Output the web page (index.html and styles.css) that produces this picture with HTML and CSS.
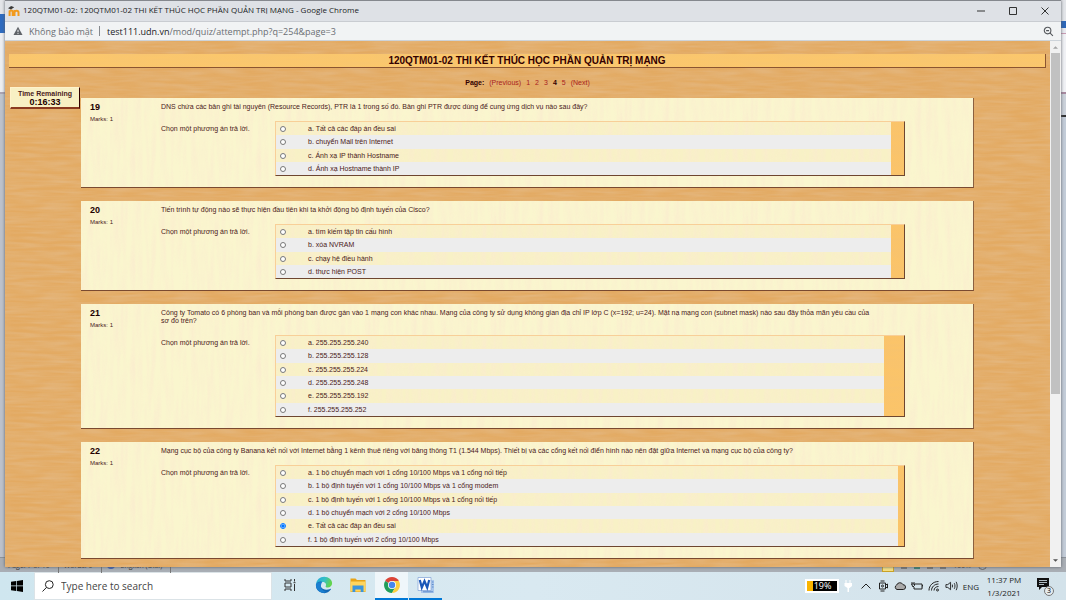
FILE: index.html
```html
<!DOCTYPE html>
<html lang="vi">
<head>
<meta charset="utf-8">
<title>120QTM01-02: 120QTM01-02 THI KẾT THÚC HỌC PHẦN QUẢN TRỊ MẠNG</title>
<link rel="stylesheet" href="styles.css">
</head>
<body>
<div class="desktop">
  <div class="word-left" aria-hidden="true"></div>
  <div class="word-right" aria-hidden="true"></div>
  <div class="word-status" aria-hidden="true">
    <span class="status-item">Page: 7 of 10</span>
    <span class="status-item">Words: 0</span>
    <span class="status-item"><i class="status-dot"></i>English (U.S.)</span>
    <span class="status-views"><i class="view on"></i><i class="view"></i><i class="view green"></i><i class="view"></i><i class="view"></i><b>100%</b><i class="knob"></i></span>
  </div>
  <div class="window">
    <header class="titlebar">
      <svg class="favicon" viewBox="0 0 12 12"><path d="M1.600 11V5.600M1.600 6.400C2.200 5 4.700 5 4.700 7v4M6.500 11V5M6.500 7.500c.3-2.500 4-2.500 4 0V11" fill="none" stroke="#f29a1c" stroke-width="2"/><path d="M0 3.200 3.200 1l3 1.300L3 4.500z" fill="#3b3b3b"/></svg>
      <span class="title">120QTM01-02: 120QTM01-02 THI KẾT THÚC HỌC PHẦN QUẢN TRỊ MẠNG - Google Chrome</span>
      <div class="window-buttons">
        <button aria-label="Minimize"><svg viewBox="0 0 10 10"><path d="M1 5h8"/></svg></button>
        <button aria-label="Maximize"><svg viewBox="0 0 10 10"><path d="M1.500 1.500h7v7h-7z"/></svg></button>
        <button aria-label="Close"><svg viewBox="0 0 10 10"><path d="m1.500 1.500 7 7m0-7-7 7"/></svg></button>
      </div>
    </header>
    <div class="address">
      <svg class="warn" viewBox="0 0 10 10"><path d="M5 .8 9.500 9h-9z" fill="#5f6368"/><path d="M5 3.800v2.400M5 7.100v1" stroke="#f1f3f4" stroke-width="1"/></svg>
      <span class="insecure">Không bảo mật</span>
      <span class="divider"></span>
      <span class="url"><b>test111.udn.vn</b>/mod/quiz/attempt.php?q=254&amp;page=3</span>
      <button class="zoom" aria-label="Zoom"><svg viewBox="0 0 12 12"><circle cx="5" cy="5" r="3.600"/><path d="m7.800 7.800 3 3M3.400 5h3.200"/></svg></button>
    </div>
    <div class="viewport">
      <main class="page">
        <h1>120QTM01-02 THI KẾT THÚC HỌC PHẦN QUẢN TRỊ MẠNG</h1>
        <nav class="paging"><b>Page:</b><a href="#">(Previous)</a><a href="#">1</a><a href="#">2</a><a href="#">3</a><b>4</b><a href="#">5</a><a href="#">(Next)</a></nav>
        <aside class="timer">Time Remaining<strong>0:16:33</strong></aside>
        <form class="questions">
          <section class="card">
            <div class="info"><h2>19</h2><p>Marks: 1</p></div>
            <div class="content">
              <p class="question">DNS chứa các bản ghi tài nguyên (Resource Records), PTR là 1 trong số đó. Bản ghi PTR được dùng để cung ứng dịch vụ nào sau đây?</p>
              <div class="ablock">
                <p>Chọn một phương án trả lời.</p>
                <div class="answers end-m"><table>
                  <tr><td><input type="radio" name="q19" id="q19a"></td><td><label for="q19a">a. Tất cả các đáp án đều sai</label></td></tr>
                  <tr><td><input type="radio" name="q19" id="q19b"></td><td><label for="q19b">b. chuyển Mail trên Internet</label></td></tr>
                  <tr><td><input type="radio" name="q19" id="q19c"></td><td><label for="q19c">c. Ánh xạ IP thành Hostname</label></td></tr>
                  <tr><td><input type="radio" name="q19" id="q19d"></td><td><label for="q19d">d. Ánh xạ Hostname thành IP</label></td></tr>
                </table></div>
              </div>
            </div>
          </section>
          <section class="card">
            <div class="info"><h2>20</h2><p>Marks: 1</p></div>
            <div class="content">
              <p class="question">Tiến trình tự động nào sẽ thực hiện đầu tiên khi ta khởi động bộ định tuyến của Cisco?</p>
              <div class="ablock">
                <p>Chọn một phương án trả lời.</p>
                <div class="answers end-m"><table>
                  <tr><td><input type="radio" name="q20" id="q20a"></td><td><label for="q20a">a. tìm kiếm tập tin cấu hình</label></td></tr>
                  <tr><td><input type="radio" name="q20" id="q20b"></td><td><label for="q20b">b. xóa NVRAM</label></td></tr>
                  <tr><td><input type="radio" name="q20" id="q20c"></td><td><label for="q20c">c. chạy hệ điều hành</label></td></tr>
                  <tr><td><input type="radio" name="q20" id="q20d"></td><td><label for="q20d">d. thực hiện POST</label></td></tr>
                </table></div>
              </div>
            </div>
          </section>
          <section class="card">
            <div class="info"><h2>21</h2><p>Marks: 1</p></div>
            <div class="content">
              <p class="question">Công ty Tomato có 6 phòng ban và mỗi phòng ban được gán vào 1 mạng con khác nhau. Mạng của công ty sử dụng không gian địa chỉ IP lớp C (x=192; u=24). Mặt nạ mạng con (subnet mask) nào sau đây thỏa mãn yêu cầu của sơ đồ trên?</p>
              <div class="ablock">
                <p>Chọn một phương án trả lời.</p>
                <div class="answers end-l"><table>
                  <tr><td><input type="radio" name="q21" id="q21a"></td><td><label for="q21a">a. 255.255.255.240</label></td></tr>
                  <tr><td><input type="radio" name="q21" id="q21b"></td><td><label for="q21b">b. 255.255.255.128</label></td></tr>
                  <tr><td><input type="radio" name="q21" id="q21c"></td><td><label for="q21c">c. 255.255.255.224</label></td></tr>
                  <tr><td><input type="radio" name="q21" id="q21d"></td><td><label for="q21d">d. 255.255.255.248</label></td></tr>
                  <tr><td><input type="radio" name="q21" id="q21e"></td><td><label for="q21e">e. 255.255.255.192</label></td></tr>
                  <tr><td><input type="radio" name="q21" id="q21f"></td><td><label for="q21f">f. 255.255.255.252</label></td></tr>
                </table></div>
              </div>
            </div>
          </section>
          <section class="card">
            <div class="info"><h2>22</h2><p>Marks: 1</p></div>
            <div class="content">
              <p class="question">Mạng cục bộ của công ty Banana kết nối với Internet bằng 1 kênh thuê riêng với băng thông T1 (1.544 Mbps). Thiết bị và các cổng kết nối điển hình nào nên đặt giữa Internet và mạng cục bộ của công ty?</p>
              <div class="ablock">
                <p>Chọn một phương án trả lời.</p>
                <div class="answers end-s"><table>
                  <tr><td><input type="radio" name="q22" id="q22a"></td><td><label for="q22a">a. 1 bộ chuyển mạch với 1 cổng 10/100 Mbps và 1 cổng nối tiếp</label></td></tr>
                  <tr><td><input type="radio" name="q22" id="q22b"></td><td><label for="q22b">b. 1 bộ định tuyến với 1 cổng 10/100 Mbps và 1 cổng modem</label></td></tr>
                  <tr><td><input type="radio" name="q22" id="q22c"></td><td><label for="q22c">c. 1 bộ định tuyến với 1 cổng 10/100 Mbps và 1 cổng nối tiếp</label></td></tr>
                  <tr><td><input type="radio" name="q22" id="q22d"></td><td><label for="q22d">d. 1 bộ chuyển mạch với 2 cổng 10/100 Mbps</label></td></tr>
                  <tr><td><input type="radio" name="q22" id="q22e" checked></td><td><label for="q22e">e. Tất cả các đáp án đều sai</label></td></tr>
                  <tr><td><input type="radio" name="q22" id="q22f"></td><td><label for="q22f">f. 1 bộ định tuyến với 2 cổng 10/100 Mbps</label></td></tr>
                </table></div>
              </div>
            </div>
          </section>
        </form>
      </main>
      <div class="scrollbar">
        <button aria-label="Scroll up"><svg viewBox="0 0 6 4"><path d="M0 4 3 1l3 3z" fill="#a3a3a3"/></svg></button>
        <div class="track"><div class="thumb"></div></div>
        <button aria-label="Scroll down"><svg viewBox="0 0 6 4"><path d="M0 0h6L3 3z" fill="#505050"/></svg></button>
      </div>
    </div>
  </div>
</div>
<footer class="taskbar">
  <button class="start" aria-label="Start"><svg viewBox="0 0 12 12"><path d="M0 1.700 5.200 1v4.600H0zM5.900.9 12 0v5.600H5.900zM0 6.300h5.200v4.700L0 10.300zM5.900 6.300H12V12l-6.100-.9z"/></svg></button>
  <label class="search"><svg viewBox="0 0 12 12"><circle cx="7.300" cy="4.600" r="3.900"/><path d="M4.500 7.400.5 11.500"/></svg><input type="text" placeholder="Type here to search" aria-label="Search"></label>
  <div class="apps">
    <button aria-label="Task view"><svg class="stroke small" viewBox="0 0 14 14"><path d="M2 1v2h6V1M2 5h6v4H2zM2 13v-2h6v2M11.500 1v2.500M11.500 6v7M10.500 4.700h2"/></svg></button>
    <button aria-label="Edge"><svg viewBox="0 0 18 18"><defs><linearGradient id="eg" x1="0" x2="1" y1="0" y2=".3"><stop offset="0" stop-color="#22a6dc"/><stop offset=".55" stop-color="#35bfc7"/><stop offset="1" stop-color="#62d44c"/></linearGradient></defs><path d="M1 8.500C1.400 3.800 5 .8 9.200.8c4.500 0 7.900 3 7.900 6.500 0 2.600-2 4.200-4.400 4.200-1.800 0-2.400-.7-2-1.300.9-1.500.2-4.200-3.100-4.200C4 6 1.200 7.800 1 8.500z" fill="url(#eg)"/><path d="M.9 9C1 6.900 4 5.200 7.100 5.500 5.200 6.500 4.800 9 6 11c1.900 3.100 6 3.300 9.200 1.900.7-.2 1 .2.600.7A8.200 8.200 0 0 1 .9 9z" fill="#1267b4"/><path d="M6.200 8.300c-1 3 .5 6.800 5.300 7.600C5.500 18.500 1 14 .9 9c.5-2 3.400-3.300 6.400-2.900-.5.500-.9 1.200-1.100 2.200z" fill="#1b7fd0"/></svg></button>
    <button aria-label="File Explorer"><svg viewBox="0 0 18 18"><path d="M1.500 2.500h5l1.500 1.500h8.500v12h-15z" fill="#e8a317"/><path d="M1.500 5.500h15v10h-15z" fill="#ffd55e"/><path d="M3.500 9.500h11V16h-2.800v-2.600H6.300V16H3.500z" fill="#3b95dd"/></svg></button>
    <button class="active" aria-label="Chrome"><svg viewBox="0 0 18 18"><path d="M9 9 2.100 5A8 8 0 0 1 15.900 5z" fill="#dc4437"/><path d="M9 9 2.100 5A8 8 0 0 0 9 17l3.500-6z" fill="#229e5a"/><path d="M9 5h6.900A8 8 0 0 1 9 17l3.500-6z" fill="#fdcf40"/><circle cx="9" cy="9" r="4" fill="#fff"/><circle cx="9" cy="9" r="3.200" fill="#4787ed"/></svg></button>
    <button class="open" aria-label="Word"><svg viewBox="0 0 18 18"><path d="M4 4h13v13H4z" fill="#a9c6ec"/><path d="M1 1.500h13v13H1z" fill="#fff" stroke="#8aaada" stroke-width=".8"/><path d="M15 6h1.500M15 8.500h1.500M15 11h1.500M6 15.800h10" fill="none" stroke="#5f8ccc"/><path d="m2.800 4 2 7.500L7.500 5l2.700 6.500 2-7.500" fill="none" stroke="#1b58b8" stroke-width="2.200"/></svg></button>
  </div>
  <div class="tray">
    <span class="battery">19%</span>
    <svg class="plug" viewBox="0 0 8 12"><path d="M1.500 0h1v3h3V0h1v3H8v3L5.500 8H5v4H3.500V8L.5 6V3h1z" fill="#fff"/></svg>
    <svg viewBox="0 0 12 12"><path d="M1.500 8.500 6 4l4.500 4.500"/></svg>
    <svg viewBox="0 0 12 12"><path d="M2.500 3h6v6h-6zM8.500 5l2-1v4l-2-1M3.500 1h4M3.500 11h4"/><circle cx="5.500" cy="6" r="1"/></svg>
    <svg viewBox="0 0 12 12"><path d="M3 9.500A2.400 2.400 0 0 1 2.700 5 3.400 3.400 0 0 1 9 4.700a2.400 2.400 0 0 1 .3 4.800z" fill="#aaa"/></svg>
    <svg viewBox="0 0 12 12"><path d="M4 4h7v5H3V7M11 5.500h1v2M1 2v2M3 2v2M.5 4h3v1.500L2 7z"/></svg>
    <svg class="wifi" viewBox="0 0 12 12"><path d="M1 10.500C1 5.500 5 1.500 10.500 1.500M3.500 10.500c0-3.500 3-6.500 7-6.500M6 10.500c0-2.300 2-4 4.500-4"/><circle cx="9.500" cy="10" r="1"/></svg>
    <svg class="speaker" viewBox="0 0 14 12"><path d="M1 4.500h2L6 2v8L3 7.500H1zM8 4.500v3M10 3c1 2 1 4 0 6M12 1.500c1.500 3 1.500 6 0 9"/></svg>
    <span class="lang">ENG</span>
    <time class="clock">11:37 PM<br>1/3/2021</time>
    <button class="notify" aria-label="Notifications"><svg viewBox="0 0 14 12"><path d="M1 0h12v9H6l-3 3V9H1z" fill="#111"/><path d="M3 2.500h8M3 4.500h8M3 6.500h5" stroke="#d9e9f0" stroke-width=".8"/></svg><span>3</span></button>
  </div>
</footer>
</body>
</html>
```
FILE: styles.css
```css
:root {
  --ui: "Open Sans", "Noto Sans", sans-serif;
  --doc: "Liberation Sans", Arial, sans-serif;
  --wood: url("data:image/svg+xml,%3Csvg xmlns='http://www.w3.org/2000/svg' width='134' height='90'%3E%3Cfilter id='a' x='0' y='0' width='100%25' height='100%25'%3E%3CfeTurbulence type='fractalNoise' baseFrequency='.03 .3' numOctaves='2' seed='4' stitchTiles='stitch'/%3E%3CfeColorMatrix values='0 0 0 0 .78 0 0 0 0 .5 0 0 0 0 .25 1.2 0 0 0 -.35'/%3E%3C/filter%3E%3Crect width='134' height='90' filter='url(%23a)'/%3E%3C/svg%3E");
  --grain: url("data:image/svg+xml,%3Csvg xmlns='http://www.w3.org/2000/svg' width='126' height='150'%3E%3Cfilter id='a' x='0' y='0' width='100%25' height='100%25'%3E%3CfeTurbulence type='fractalNoise' baseFrequency='.2 .02' numOctaves='2' seed='7' stitchTiles='stitch'/%3E%3CfeColorMatrix values='0 0 0 0 .96 0 0 0 0 .83 0 0 0 0 .62 1.4 0 0 0 -.5'/%3E%3C/filter%3E%3Crect width='126' height='150' filter='url(%23a)'/%3E%3C/svg%3E");
}
* { box-sizing: border-box; }
body {
  margin: 0;
  min-height: 100vh;
  display: flex;
  flex-direction: column;
  font-family: var(--ui);
  background: #b4b9c2;
}
button { border: 0; padding: 0; background: none; font: inherit; display: grid; place-items: center; }
svg { display: block; }
h1, h2, p { margin: 0; }

/* desktop behind the browser window */
.desktop { position: relative; flex: 1; display: flex; padding: 0 5px 5px; }
.word-left, .word-right { position: absolute; top: 0; bottom: 0; width: 5px; }
.word-left {
  left: 0;
  background: linear-gradient(#e3e5e9 0 14px, #2e6bc0 14px 33px, #eceef2 33px 92px, #aaa3b1 92px 94px, #bfc4cc 94px 110px, #bcc1cb 110px);
}
.word-right {
  right: 0;
  background: linear-gradient(#e3e5e9 0 21px, #2c66b8 21px 28px, #e8eaf0 28px 33px, #c99cb4 33px 34px, #f0f1f5 34px 92px, #a889a0 92px 94px, #cbd1da 94px 115px, #333 115px 117px, #c3ccd8 117px);
}
.word-status {
  position: absolute;
  left: 0; right: 0; bottom: 0;
  height: 15px;
  display: flex;
  align-items: center;
  padding-left: 8px;
  background: #a9aeb5;
  color: #333;
  font-size: 7px;
  border-top: 1px solid #8c929a;
}
.status-item { display: flex; align-items: center; gap: 6px; padding-right: 8px; margin-right: 5px; border-right: 1px solid #777; height: 15px; }
.status-dot { width: 8px; height: 8px; border-radius: 50%; background: #3f62b5; }
.status-views { margin-left: auto; display: flex; align-items: center; gap: 7px; padding-right: 79px; height: 15px; }
.view { width: 6px; height: 8px; background: #777; }
.view.on { width: 12px; height: 13px; background: #f5df82; border: 1px solid #c9a227; }
.view.green { background: #3c8270; }
.status-views b { font-weight: 400; }
.knob { width: 9px; height: 9px; border: 1px solid #666; border-radius: 50%; }

.window { position: relative; flex: 1; display: flex; flex-direction: column; border-top: 1px solid #85888e; box-shadow: 0 0 3px #5b5f66; }
.titlebar { display: flex; align-items: center; gap: 3px; height: 20px; padding-left: 3px; background: #dee1e6; }
.favicon { width: 12px; height: 12px; }
.title { font-size: 8px; line-height: 10px; padding-bottom: 2px; color: #202124; white-space: nowrap; }
.window-buttons { display: flex; margin-left: auto; }
.window-buttons button { width: 32px; height: 20px; }
.window-buttons svg { width: 10px; height: 10px; fill: none; stroke: #333; }
.address { display: flex; align-items: center; height: 20px; padding: 0 7px 0 8px; background: #f1f3f4; border-top: 1px solid #c9ccd1; border-bottom: 1px solid #cdd3d9; font-size: 9px; color: #6a6e73; white-space: nowrap; }
.warn { width: 10px; height: 10px; margin-right: 6px; }
.divider { width: 1px; height: 10px; margin: 0 7px 0 6px; background: #85898e; }
.url b { font-weight: 400; color: #202124; }
.zoom { margin-left: auto; }
.zoom svg { width: 11px; height: 11px; fill: none; stroke: #55585c; stroke-width: 1.2; }

.viewport { flex: 1; display: flex; }
.page { position: relative; flex: 1; padding: 13px 4px 8px; background: var(--wood) #e3aa62; font-family: var(--doc); color: #4a2020; }
h1 { height: 14px; font-size: 10px; line-height: 13px; text-align: center; color: #300; background: linear-gradient(#fbc76cd0, #fbc76cd0), var(--wood) #fbc76c; border-right: 1px solid #8b5530; border-bottom: 1px solid #8b5530; }
.paging { display: flex; justify-content: center; gap: 5px; margin: 10px 0; font-size: 7px; line-height: 10px; color: #300; }
.paging a { color: #a82222; text-decoration: none; }
.timer { position: absolute; left: 5px; top: 46px; width: 70px; padding-top: 1px; background: #f8f0c4; border: 1px solid #fff3cc; border-right-color: #300; border-bottom: 2px solid #8b3a20; text-align: center; font-size: 7px; font-weight: 700; line-height: 9px; }
.timer strong { display: block; font-size: 9px; color: #200; }
.questions { display: grid; gap: 13px; padding: 0 72px; }
.card { display: flex; padding: 4px 61px 11px 9px; background: var(--grain) #faf6ce; border-right: 1px solid #8b6040; border-bottom: 1px solid #7a4a30; }
.info { width: 71px; flex: none; }
.info h2 { font-size: 9px; line-height: 10px; color: #200; }
.info p { margin-top: 3px; font-size: 6px; line-height: 8px; }
.content { flex: 1; font-size: 7px; line-height: 8px; }
.question { padding: 1px 38px 0 0; }
.ablock { display: flex; margin-top: 10px; padding-right: 7px; }
.ablock > p { width: 114px; padding-top: 4px; flex: none; }
.answers { flex: 1; background: linear-gradient(#fbc469d0, #fbc469d0), var(--wood) #fbc469; border: 1px solid #f8cf98; border-right-color: #6e4630; border-bottom-color: #6e4630; }
.end-s { padding-right: 6px; }
.end-m { padding-right: 13px; }
.end-l { padding-right: 20px; }
table { width: 100%; border-collapse: collapse; background: var(--grain) #f8f1c6; }
tr { height: 13px; }
tr:nth-child(3n + 2) { height: 14px; }
tr:nth-child(even) { background: #ededed; }
td { padding: 0; }
td:first-child { width: 32px; padding-left: 4px; }
td label { display: block; }
input[type="radio"] { display: block; margin: 0; width: 6px; height: 6px; }

.scrollbar { width: 11px; display: flex; flex-direction: column; background: #f1f1f1; }
.scrollbar button { height: 12px; }
.scrollbar svg { width: 5px; height: 4px; }
.track { flex: 1; }
.thumb { height: 68%; margin: 0 1px; background: #c1c1c1; }

.taskbar { display: flex; height: 28px; background: linear-gradient(90deg, #cfe6ef, #d9e9f1 50%, #d3e2ea); }
.start { width: 34px; }
.start svg { width: 12px; height: 12px; }
.search { display: flex; align-items: center; gap: 7px; width: 238px; padding-left: 7px; background: #fff; border: 1px solid #dbe3e7; }
.search svg { width: 12px; height: 12px; fill: none; stroke: #222; }
.search input { flex: 1; min-width: 0; border: 0; padding: 0; outline: 0; background: none; font: 10px var(--ui); color: #444; }
.search input::placeholder { color: #444; opacity: 1; }
.apps { display: flex; gap: 1px; padding-left: 1px; }
.apps button { width: 33px; border-bottom: 2px solid transparent; }
.apps svg { width: 18px; height: 18px; }
.apps .small { width: 14px; height: 14px; }
.stroke { fill: none; stroke: #333; }
.apps .active { background: #eff6fa; border-color: #0078d7; }
.apps .open { border-color: #0078d7; }
.tray { display: flex; align-items: center; gap: 5px; margin-left: auto; padding-right: 12px; font-size: 8px; color: #222; }
.tray svg { width: 12px; height: 12px; fill: none; stroke: #222; stroke-width: 1; }
.tray .plug { width: 8px; margin-right: 3px; stroke: none; }
.tray .speaker { width: 13px; }
.battery { width: 34px; padding-left: 7px; border: 2px solid #fff; background: linear-gradient(90deg, #f9b400 6px, #000 6px); color: #fff; font-size: 9px; line-height: 10px; }
.lang { margin: 0 2px 0 0; }
.clock { width: 36px; text-align: center; line-height: 13px; white-space: nowrap; }
.tray .notify { position: relative; margin-left: 9px; width: 18px; height: 16px; place-items: start; }
.tray .notify svg { width: 14px; stroke: none; }
.notify span { position: absolute; right: 0; bottom: -2px; width: 10px; height: 10px; border: 1px solid #777; border-radius: 50%; background: #e5ebee; font-size: 7px; line-height: 8px; text-align: center; }
```
